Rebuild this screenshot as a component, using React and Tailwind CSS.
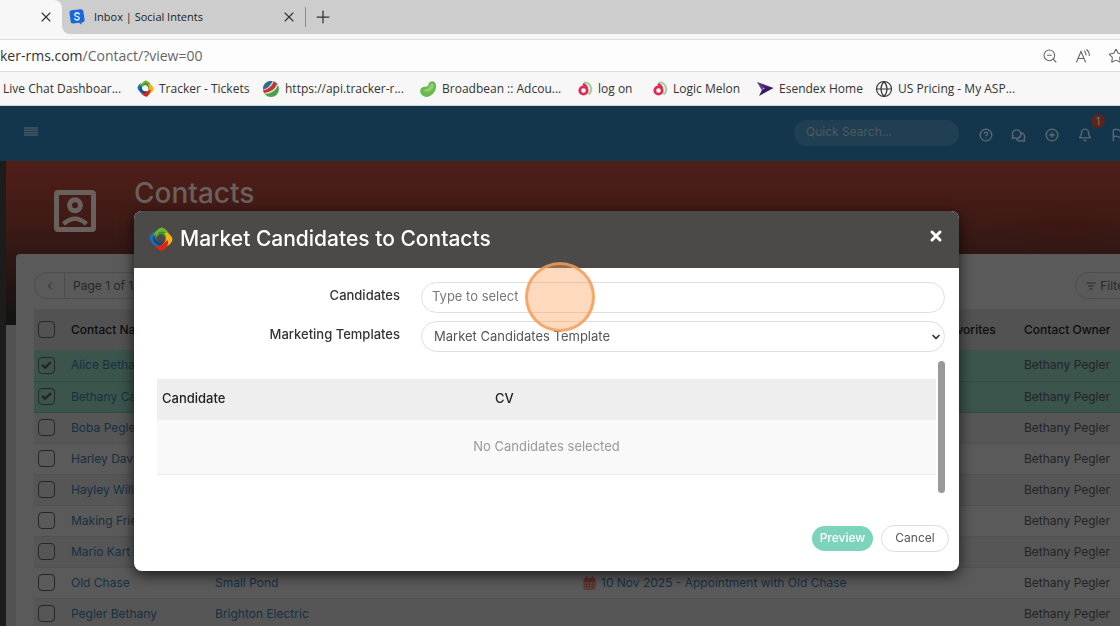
import { Bell, Check, ChevronDown, ChevronLeft, CircleHelp, CirclePlus, Flag, Globe, ListFilter, Plus, Star, X, ZoomOut } from "lucide-react";
import { PiChatsCircleBold } from "react-icons/pi";

const contacts = [
    { name: "Alice Bethany", selected: true },
    { name: "Bethany Carter", selected: true },
    { name: "Boba Pegler" },
    { name: "Harley Davidson" },
    { name: "Hayley Williams" },
    { name: "Making Friends" },
    { name: "Mario Kart" },
    { name: "Old Chase", company: "Small Pond", activity: "10 Nov 2025 - Appointment with Old Chase" },
    { name: "Pegler Bethany", company: "Brighton Electric" },
];

// Four-sided ribbon logo, one colour per side
function TrackerLogo({ className }) {
    return (
        <svg viewBox="0 0 24 24" className={className} aria-hidden="true">
            <path d="M4 8 Q10 0 13 .6 Q18 2 20 7 L16 9 Q12 5 8 9 Q6 11 8 15 Q3 12 4 8Z" fill="#6fb52c" />
            <path d="M10 5 Q16 3 18 8 Q20 13 16 16 Q17 10 14 8 Q12 6 8 8Z" fill="#3f8e2f" />
            <path d="M19 6 Q24 10 23.4 13 Q22 18 16 20 L13 17 Q18 15 17 10 Q17 8 15 6Z" fill="#fbb11b" />
            <path d="M19 13 Q20 18 15 23 Q12 24.500 9 22 Q6 20 5 16 L8 15 Q11 19 15 16Z" fill="#e2231a" />
            <path d="M6 4 Q3 9 7 14 Q9 17 13 17 Q9 21 5 18 Q1 14 .6 11 Q1 7 6 4Z" fill="#1d6fc0" />
            <path d="M7 7 Q5 12 9 15 Q12 17 15 15 Q12 20 8 18 Q3 14 4 10Z" fill="#164a7c" />
        </svg>
    );
}

function ApiLogo() {
    return (
        <svg viewBox="0 0 18 18" className="size-[18px]" aria-hidden="true">
            <circle cx="9" cy="9" r="8" fill="#4f9e4a" />
            <path d="M1.500 6 Q5 0 11 1.300 Q8 7 1 10Z" fill="#2f6c97" />
            <path d="M1 9.500 Q9 9 12 1.600 L15 3.600 Q12 12 2 13Z" fill="#cf3038" />
            <path d="M1.200 9.500 Q8 8 10.500 1.300 L11.500 1.400 Q9 8.800 1.200 10.300Z M2.500 13 Q12 12 15.200 4 L16 5.200 Q13 13 3.500 14Z" fill="#dfe9dc" />
        </svg>
    );
}

function BeanLogo() {
    return (
        <svg viewBox="0 0 18 18" className="size-[18px]" aria-hidden="true">
            <path d="M8 6.500 Q9 6 9.500 4 Q10.500 1 13.500 1.200 Q17.500 2 17 7 Q16.500 13 11 16 Q5 18.500 2 14 Q-.5 9 4 7 Q6 6.200 8 6.500Z" fill="#6cb84e" />
            <path d="M11.500 4.500 Q13 2.500 14.500 4.500 Q15 9 11 11 Q7 13 4 10 Q9 9.500 11.500 4.500Z" fill="#8fd070" />
        </svg>
    );
}

function MelonLogo() {
    return (
        <svg viewBox="0 0 16 16" className="size-4" aria-hidden="true">
            <path d="M7 1.500 A6.700 6.700 0 0 1 11.500 13.500" fill="none" stroke="#a9cf9b" strokeWidth="2.200" />
            <path d="M6 2.800 Q9 4.500 10 7" fill="none" stroke="#e02a55" strokeWidth="2.600" />
            <circle cx="6.500" cy="9.500" r="3.700" fill="#fff" stroke="#e02a55" strokeWidth="2.800" />
        </svg>
    );
}

function EsendexLogo() {
    return (
        <svg viewBox="0 0 18 16" className="h-4 w-[18px]" aria-hidden="true">
            <path d="M1 1 L17.500 7 L9 8 Z" fill="#4b2173" />
            <path d="M17.500 7 L3 15 L6 9 L10 6.500Z" fill="#3a175e" />
            <path d="M1 1 L8 6 L6 9.500Z" fill="#5f3a88" />
        </svg>
    );
}

function SocialLogo() {
    return (
        <svg viewBox="0 0 16 16" className="size-4" aria-hidden="true">
            <path d="M2.500 1.200 L12 .2 Q14 .2 14.300 2 L15.600 11 Q15.600 13 14 13.200 L12.500 13.400 L12.500 15.800 L10 13.800 L4 14.600 Q2 14.600 1.700 13 L.4 3.500 Q.4 1.500 2.500 1.200Z" fill="#1769d8" />
            <path d="M10.300 5 Q8 2.800 6 4.800 Q5.200 6.600 7.800 7.400 Q10.800 8.200 10 10 Q8.300 12 5.800 9.900" fill="none" stroke="#d5e6ff" strokeWidth="1.500" strokeLinecap="round" />
        </svg>
    );
}

const bookmarks = [
    { label: "Tracker - Tickets", icon: <TrackerLogo className="size-[17px]" />, width: "w-[125px]" },
    { label: "https://api.tracker-r...", icon: <ApiLogo />, width: "w-[157px]" },
    { label: "Broadbean :: Adcou...", icon: <BeanLogo />, width: "w-[158px]" },
    { label: "log on", icon: <MelonLogo />, width: "w-[75px]" },
    { label: "Logic Melon", icon: <MelonLogo />, width: "w-[104px]" },
    { label: "Esendex Home", icon: <EsendexLogo />, width: "w-[119px]" },
    { label: "US Pricing - My ASP...", icon: <Globe className="size-[18px]" strokeWidth={1.5} />, width: "w-[160px]" },
];

function Browser() {
    return (
        <header className="shrink-0 bg-[#f7f7f7] font-['Open_Sans','Noto_Sans',sans-serif] text-xs text-[#333]">
            <div className="flex h-[34px]">
                <div className="w-[62px] bg-[#cdcdcd]">
                    <div className="flex h-full items-center justify-end rounded-tr-lg bg-[#f7f7f7] pr-2">
                        <button aria-label="Close current tab"><X className="size-4" strokeWidth={1.6} /></button>
                    </div>
                </div>
                <div className="flex flex-1 items-center rounded-bl-lg bg-[#cdcdcd] pl-[7px]">
                    <SocialLogo />
                    <span className="ml-[9px] w-[187px] whitespace-nowrap text-[11px] text-[#222]">Inbox | Social Intents</span>
                    <button aria-label="Close tab"><X className="size-4" strokeWidth={1.6} /></button>
                    <span className="ml-2 h-5 w-px bg-[#8b8b8b]" />
                    <button aria-label="New tab" className="ml-[7px]"><Plus className="size-5" strokeWidth={1.5} /></button>
                </div>
            </div>
            <div className="mt-[5px] flex h-[33px] items-center justify-between overflow-hidden border-y border-[#dcdcdc] bg-[#fdfdfd]">
                <span className="whitespace-nowrap text-sm text-[#666]"><span className="text-[#333]">ker-rms.com</span>/Contact/?view=00</span>
                <div className="-mr-1 flex shrink-0 items-center gap-4 text-[#666]">
                    <button aria-label="Zoom out"><ZoomOut className="size-4" strokeWidth={1.6} /></button>
                    <button aria-label="Read aloud">
                        <svg viewBox="0 0 18 16" className="h-4 w-[18px]" fill="none" stroke="currentColor" strokeWidth="1.100" strokeLinecap="round">
                            <path d="M2.500 14 L7 3.500 L11.500 14 M4 10.500 H10 M10.500 3 Q12 4.500 12 7 M12.700 1.500 Q15.500 4 15.300 7.500" />
                        </svg>
                    </button>
                    <button aria-label="Favorite"><Star className="size-4" strokeWidth={1.6} /></button>
                </div>
            </div>
            <nav className="flex h-[34px] items-center overflow-hidden whitespace-nowrap border-b border-[#c8d5dc]">
                <a href="#chat" className="w-[137px] shrink-0 pl-[3px]">Live Chat Dashboar...</a>
                {bookmarks.map((item) => (
                    <a key={item.label} href="#bookmark" className={`flex shrink-0 items-center gap-[5px] ${item.width}`}>
                        {item.icon}
                        {item.label}
                    </a>
                ))}
            </nav>
        </header>
    );
}

function TopBar() {
    return (
        <div className="flex h-[55px] shrink-0 items-center overflow-hidden bg-[#13364c] pl-6 text-[#5b6b75]">
            <button aria-label="Menu" className="-mt-1">
                <svg viewBox="0 0 14 9" className="h-[9px] w-3.5" stroke="currentColor" strokeWidth="1.100">
                    <path d="M0 1 H14 M0 3.300 H14 M0 5.700 H14 M0 8 H14" />
                </svg>
            </button>
            <input
                type="search"
                aria-label="Quick search"
                placeholder="Quick Search..."
                className="-mt-0.5 ml-auto h-[26px] w-[165px] rounded-full bg-[#213f52] px-3 pb-0.5 text-xs placeholder:text-[#4e5a61]"
            />
            <div className="-mr-3.5 ml-2.5 flex shrink-0 pt-1">
                <button aria-label="Help" className="flex w-[33px] justify-center"><CircleHelp className="size-3.5" strokeWidth={2.3} /></button>
                <button aria-label="Messages" className="flex w-[33px] justify-center"><PiChatsCircleBold className="size-[15px]" /></button>
                <button aria-label="Add" className="flex w-[33px] justify-center"><CirclePlus className="size-3.5" strokeWidth={2.3} /></button>
                <button aria-label="Notifications" className="relative flex w-[33px] justify-center">
                    <Bell className="size-3.5" strokeWidth={2.3} />
                    <span className="absolute -top-3.5 -right-1 flex size-3.5 items-center justify-center rounded-full bg-[#59251d] text-[10px] text-[#8a7773]">1</span>
                </button>
                <button aria-label="Flags" className="flex w-[33px] justify-center"><Flag className="size-3.5" strokeWidth={2.3} /></button>
            </div>
        </div>
    );
}

function Checkbox({ label, checked }) {
    return (
        <span className="relative ml-1 block size-[17px]">
            <input type="checkbox" aria-label={label} defaultChecked={checked} className="block size-[17px] appearance-none rounded border border-[#272727]" />
            {checked && <Check className="pointer-events-none absolute left-[3px] top-[3px] size-[11px] text-[#222]" strokeWidth={5} />}
        </span>
    );
}

function CalendarIcon() {
    return (
        <svg viewBox="0 0 13 14" className="h-[14px] w-[13px] shrink-0" fill="none" stroke="#5d2a22" aria-hidden="true">
            <path d="M1 2.500 H12 V13 H1Z M1 6 H12 M1 8.300 H12 M1 10.600 H12 M3.700 5 V13 M6.500 5 V13 M9.300 5 V13" />
            <path d="M1 4 H12" strokeWidth="3" />
            <path d="M3.700 .5 V3 M9.300 .5 V3" strokeWidth="2" />
        </svg>
    );
}

function ContactsTable() {
    return (
        <table className="w-full table-fixed whitespace-nowrap text-left text-xs text-[#242424]">
            <colgroup>
                <col className="w-[37px]" />
                <col className="w-36" />
                <col className="w-[368px]" />
                <col />
                <col className="w-[81px]" />
                <col className="w-24" />
            </colgroup>
            <thead>
                <tr className="h-[41px] bg-[#525252] text-[#0d0d0d]">
                    <th><Checkbox label="Select all contacts" /></th>
                    <th className="font-medium">Contact Name</th>
                    <th className="font-medium">Company</th>
                    <th className="font-medium">Activity</th>
                    <th className="font-medium">Favorites</th>
                    <th className="font-medium">Contact Owner</th>
                </tr>
            </thead>
            <tbody>
                {contacts.map((contact) => (
                    <tr
                        key={contact.name}
                        className={contact.selected ? "h-[31px] border-b border-[#2f4c43] bg-[#3b544c]" : "h-[31px] border-b border-[#515151] odd:bg-[#565656]"}
                    >
                        <td><Checkbox label={contact.name} checked={contact.selected} /></td>
                        <td><a href="#contact" className="text-[#173042]">{contact.name}</a></td>
                        <td><a href="#company" className="text-[#173042]">{contact.company}</a></td>
                        <td>
                            {contact.activity && (
                                <a href="#activity" className="flex items-center gap-[5px] text-[#173042]">
                                    <CalendarIcon />
                                    {contact.activity}
                                </a>
                            )}
                        </td>
                        <td></td>
                        <td>Bethany Pegler</td>
                    </tr>
                ))}
            </tbody>
        </table>
    );
}

function ContactsPage() {
    return (
        <div className="flex flex-1 bg-[#1d1c1b]">
            <main className="ml-1.5 min-w-0 flex-1 bg-[#525252] bg-[radial-gradient(ellipse_90px_28px_at_95%_66px,#3a120e66,transparent),linear-gradient(to_bottom,#4f1e19_0%,#401b16_35%,#2d1713_60%,#121212_100%)] bg-[length:100%_164px] bg-no-repeat">
                <div className="flex h-[93px] items-start pl-12 pt-[29px]">
                    <svg viewBox="0 0 42 42" className="size-[42px]" fill="none" stroke="#6a605e" strokeWidth="5" aria-hidden="true">
                        <rect x="2.500" y="2.500" width="37" height="37" rx="1.500" />
                        <circle cx="21" cy="15.300" r="5.500" strokeWidth="5" />
                        <path d="M9.500 34 Q21 23.500 32.500 34" strokeWidth="4.500" />
                    </svg>
                    <h1 className="-mt-[18px] ml-[38px] text-[28px] font-medium text-[#6a605e]">Contacts</h1>
                </div>
                <section className="ml-2.5 rounded-tl bg-[#5a5a5a] pl-[18px] pt-[18px]">
                    <div className="mb-2.5 flex h-[27px] items-stretch justify-between overflow-hidden text-xs text-[#282828]">
                        <div className="flex items-center rounded-full border border-[#4d4d4d]">
                            <button aria-label="Previous page" className="flex h-full w-[30px] items-center justify-center border-r border-[#4d4d4d]"><ChevronLeft className="size-3" /></button>
                            <span className="px-2">Page 1 of 1</span>
                            <span className="w-5" />
                        </div>
                        <button className="-mr-7 flex shrink-0 items-center gap-1 rounded-full border border-[#4d4d4d] pl-2.5 pr-3">
                            <ListFilter className="size-2.5" strokeWidth={2.5} />
                            Filters
                        </button>
                    </div>
                    <ContactsTable />
                </section>
            </main>
        </div>
    );
}

function MarketModal() {
    return (
        <div className="fixed inset-x-0 top-[211px] pl-[134px] pr-[161px]">
            <div role="dialog" aria-labelledby="modal-title" className="overflow-hidden rounded-lg bg-white shadow-[0_4px_14px_rgba(0,0,0,0.7)]">
                <div className="flex h-[57px] items-center bg-[#4b4a48] px-[15px] pb-0.5 text-white">
                    <TrackerLogo className="size-6" />
                    <h2 id="modal-title" className="ml-[7px] text-[21px] font-medium">Market Candidates to Contacts</h2>
                    <button aria-label="Close" className="-mt-1.5 ml-auto"><X className="size-4" strokeWidth={4.5} /></button>
                </div>
                <form className="px-3.5 pt-3.5 text-[13px] text-[#333]">
                    <div className="grid grid-cols-[252px_1fr] gap-x-[21px] gap-y-2">
                        <label htmlFor="candidates" className="pt-1 text-right font-medium">Candidates</label>
                        <input id="candidates" type="text" placeholder="Type to select" className="h-[31px] rounded-full border border-[#dedede] px-2.5 pb-1 placeholder:text-[#7a7a7a]" />
                        <label htmlFor="template" className="pt-1 text-right font-medium">Marketing Templates</label>
                        <div className="relative">
                            <select id="template" className="h-[31px] w-full appearance-none rounded-full border border-[#dedede] px-3 text-[#555]">
                                <option>Market Candidates Template</option>
                            </select>
                            <ChevronDown className="pointer-events-none absolute right-[3px] top-[10px] size-3 text-[#333]" strokeWidth={3.5} />
                        </div>
                    </div>
                    <div className="mt-[9px] flex h-[132px] justify-between pl-[9px]">
                        <div className="flex-1 pt-[18px]">
                            <table className="w-full table-fixed text-left">
                                <thead>
                                    <tr className="h-[41px] bg-[#eee] text-[#222]">
                                        <th className="w-[333px] pb-0.5 pl-[5px] font-medium">Candidate</th>
                                        <th className="pb-0.5 pl-[5px] font-medium">CV</th>
                                    </tr>
                                </thead>
                                <tbody>
                                    <tr className="h-[54px] border-b border-[#eee] bg-[#f9f9f9] text-center text-[#999]">
                                        <td colSpan={2}>No Candidates selected</td>
                                    </tr>
                                </tbody>
                            </table>
                        </div>
                        <div className="ml-0.5 w-[7px] rounded-full bg-[#999]" />
                    </div>
                    <div className="-mr-1 flex items-center justify-end gap-2 pb-[19px] pt-8 text-xs">
                        <button type="button" className="h-[25px] w-[61px] rounded-full bg-[#7dd3bc] pb-0.5 font-medium text-white">Preview</button>
                        <button type="button" className="h-[27px] w-[68px] rounded-full border border-[#dcdcdc] pb-0.5 text-[#555]">Cancel</button>
                    </div>
                </form>
            </div>
        </div>
    );
}

export default function App() {
    return (
        <div className="flex h-screen flex-col overflow-hidden bg-[#5a5a5a] font-['Inter','Liberation_Sans',sans-serif]">
            <Browser />
            <TopBar />
            <ContactsPage />
            <MarketModal />
            {/* click marker */}
            <span className="pointer-events-none fixed left-[525px] top-[262px] size-[70px] rounded-full border-[3px] border-[#f39a58]/80 bg-[#f99f5a]/40" />
        </div>
    );
}
